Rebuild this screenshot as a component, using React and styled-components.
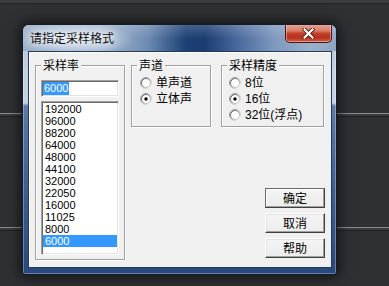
import React, { useId } from 'react';
import styled, { createGlobalStyle } from 'styled-components';

const Global = createGlobalStyle`
  html, body { margin: 0; padding: 0; background: #2f3033; }
  body { width: 389px; height: 286px; overflow: hidden; }
  * { box-sizing: border-box; }
`;

const CJK = `"Noto Sans CJK SC", "Liberation Sans", sans-serif`;
const UI = `"Liberation Sans", "Noto Sans CJK SC", sans-serif`;

const Desktop = styled.div`
  width: 389px;
  height: 286px;
  padding: 24px 0 0 22px;
  background:
    linear-gradient(180deg, #3b3c3f 0, #3b3c3f 3px, #232427 3px, #232427 4px, transparent 4px),
    linear-gradient(180deg, transparent 113px, #8a8b8e 113px, #8a8b8e 114px, #3a3b3e 114px, #3a3b3e 116px, #202124 116px, #202124 117px, transparent 117px),
    linear-gradient(180deg, transparent 227px, #8a8b8e 227px, #8a8b8e 228px, #3a3b3e 228px, #3a3b3e 230px, #202124 230px, #202124 231px, transparent 231px),
    #2f3033;
`;

const Window = styled.div`
  width: 315px;
  height: 251px;
  border: 1px solid #141c28;
  border-radius: 7px 7px 3px 3px;
  box-shadow: 0 0 12px 3px rgba(0, 0, 0, 0.55), inset 0 0 0 1px rgba(255, 255, 255, 0.3);
  background: linear-gradient(180deg, #b3c3d8 0, #c4d1e1 50px, #c4d1e1 78px, #5b7ba9 81px, #3e6093 160px, #29497d 100%);
  display: flex;
  flex-direction: column;
  overflow: hidden;
`;

const TitleBar = styled.div`
  height: 26px;
  display: flex;
  align-items: flex-start;
  padding: 0 4px 0 7px;
  background:
    radial-gradient(ellipse 62px 16px at 50px 14px, rgba(235, 242, 250, 0.85), rgba(235, 242, 250, 0) 100%),
    linear-gradient(180deg, rgba(255, 255, 255, 0.18) 0, rgba(255, 255, 255, 0) 14px),
    linear-gradient(90deg, #98adc8 0%, #a7b9cf 25%, #6d8ab2 40%, #1d4075 52%, #1a3c71 58%, #46679a 68%, #7d98bd 80%, #9bb0ca 92%, #8ea4c1 100%);
`;

const Title = styled.div`
  font: 12px/14px ${CJK};
  color: #111;
  margin-top: 6px;
  text-shadow: 0 0 6px rgba(255, 255, 255, 0.9), 0 0 10px rgba(255, 255, 255, 0.7);
`;

const CloseButton = styled.div`
  margin-left: auto;
  margin-top: -1px;
  width: 47px;
  height: 19px;
  border: 1px solid #4a1410;
  border-top: none;
  border-radius: 0 0 5px 5px;
  background: linear-gradient(180deg, #e9aa9c 0%, #d67864 40%, #c2412a 52%, #b8321f 75%, #d0604a 100%);
  box-shadow: inset 0 0 0 1px rgba(255, 220, 210, 0.45);
  display: flex;
  align-items: center;
  justify-content: center;
`;

const FrameBody = styled.div`
  flex: 1;
  display: flex;
  padding: 0 4px 6px 5px;
`;

const Client = styled.div`
  flex: 1;
  display: flex;
  gap: 6px;
  padding: 6px 6px 7px 6px;
  background: #f0f0f0;
  border: 1px solid #233a60;
  box-shadow: inset 1px 1px 0 #ffffff;
`;

const Group = styled.fieldset`
  margin: 0;
  padding: 0;
  width: ${(p) => p.$w}px;
  min-width: 0;
  border: 1px solid #a0a0a0;
  box-shadow: 1px 1px 0 #ffffff, inset 1px 1px 0 #ffffff;
`;

const Legend = styled.legend`
  margin-left: 5px;
  padding: 0 2px;
  font: 12px/14px ${CJK};
  color: #000;
`;

const GroupContent = styled.div`
  display: flex;
  flex-direction: column;
  gap: ${(p) => p.$gap || 0}px;
  padding: ${(p) => p.$pad};
`;

const Sunken = styled.div`
  background: #fff;
  border: 1px solid;
  border-color: #a0a0a0 #ffffff #ffffff #a0a0a0;
  box-shadow: inset 1px 1px 0 #696969, inset -1px -1px 0 #e3e3e3;
`;

const EditBox = styled(Sunken)`
  height: 17px;
  padding: 1px;
  display: flex;
  align-items: center;
`;

const SelText = styled.span`
  font: 11px/13px ${UI};
  background: #3399ff;
  color: #fff;
  padding: 0 1px;
`;

const ListBox = styled(Sunken)`
  height: 154px;
  padding: 1px;
  display: flex;
  flex-direction: column;
`;

const ListItem = styled.div`
  height: 12px;
  font: 11px/12px ${UI};
  padding-left: 2px;
  color: ${(p) => (p.$sel ? '#fff' : '#000')};
  background: ${(p) => (p.$sel ? '#3399ff' : 'transparent')};
`;

const RightColumn = styled.div`
  width: 194px;
  display: flex;
  flex-direction: column;
`;

const GroupRow = styled.div`
  display: flex;
  gap: 10px;
`;

const RadioRow = styled.div`
  height: 16px;
  display: flex;
  align-items: center;
  gap: 4px;
  font: 12px/16px ${UI};
  color: #000;
`;

const ButtonStack = styled.div`
  margin-top: auto;
  margin-bottom: 2px;
  align-self: flex-end;
  display: flex;
  flex-direction: column;
  gap: 5px;
`;

const Button = styled.div`
  width: 60px;
  height: 20px;
  display: flex;
  align-items: center;
  justify-content: center;
  font: 12px/14px ${CJK};
  color: #000;
  background: linear-gradient(180deg, #f4f4f4 0%, #ececec 100%);
  border: 1px solid;
  border-color: ${(p) => (p.$default ? '#6a6a6a #404040 #404040 #6a6a6a' : '#ffffff #404040 #404040 #ffffff')};
  box-shadow: inset -1px -1px 0 #a0a0a0, inset 1px 1px 0 ${(p) => (p.$default ? '#ffffff' : '#e3e3e3')};
`;

function Radio({ checked }) {
  const id = useId().replace(/:/g, '');
  return (
    <svg width="12" height="12" viewBox="0 0 12 12">
      <defs>
        <linearGradient id={`o${id}`} x1="0" y1="0" x2="1" y2="1">
          <stop offset="0" stopColor="#8a8a8a" />
          <stop offset="0.5" stopColor="#b0b0b0" />
          <stop offset="1" stopColor="#ffffff" />
        </linearGradient>
        <linearGradient id={`i${id}`} x1="0" y1="0" x2="1" y2="1">
          <stop offset="0" stopColor="#404040" />
          <stop offset="0.5" stopColor="#9a9a9a" />
          <stop offset="1" stopColor="#dcdcdc" />
        </linearGradient>
      </defs>
      <circle cx="6" cy="6" r="5.5" fill="none" stroke={`url(#o${id})`} strokeWidth="1" />
      <circle cx="6" cy="6" r="4.5" fill="#fff" stroke={`url(#i${id})`} strokeWidth="1" />
      {checked && <circle cx="6" cy="6" r="1.7" fill="#000" />}
    </svg>
  );
}

function CloseX() {
  return (
    <svg width="13" height="11" viewBox="0 0 13 11">
      <path d="M2.5 1.5 L10.5 9.5 M10.5 1.5 L2.5 9.5" stroke="#5a1a12" strokeWidth="4" strokeLinecap="square" />
      <path d="M2.5 1.5 L10.5 9.5 M10.5 1.5 L2.5 9.5" stroke="#ffffff" strokeWidth="2.2" strokeLinecap="square" />
    </svg>
  );
}

const rates = ['192000', '96000', '88200', '64000', '48000', '44100', '32000', '22050', '16000', '11025', '8000', '6000'];

export default function App() {
  return (
    <>
      <Global />
      <Desktop>
        <Window>
          <TitleBar>
            <Title>请指定采样格式</Title>
            <CloseButton>
              <CloseX />
            </CloseButton>
          </TitleBar>
          <FrameBody>
            <Client>
              <Group $w={90}>
                <Legend>采样率</Legend>
                <GroupContent $gap={4} $pad="8px 5px 4px 5px">
                  <EditBox>
                    <SelText>6000</SelText>
                  </EditBox>
                  <ListBox>
                    {rates.map((r) => (
                      <ListItem key={r} $sel={r === '6000'}>
                        {r}
                      </ListItem>
                    ))}
                  </ListBox>
                </GroupContent>
              </Group>
              <RightColumn>
                <GroupRow>
                  <Group $w={80}>
                    <Legend>声道</Legend>
                    <GroupContent $pad="3px 0 3px 8px">
                      <RadioRow>
                        <Radio />
                        <span>单声道</span>
                      </RadioRow>
                      <RadioRow>
                        <Radio checked />
                        <span>立体声</span>
                      </RadioRow>
                    </GroupContent>
                  </Group>
                  <Group $w={103}>
                    <Legend>采样精度</Legend>
                    <GroupContent $pad="3px 0 3px 7px">
                      <RadioRow>
                        <Radio />
                        <span>8位</span>
                      </RadioRow>
                      <RadioRow>
                        <Radio checked />
                        <span>16位</span>
                      </RadioRow>
                      <RadioRow>
                        <Radio />
                        <span>32位(浮点)</span>
                      </RadioRow>
                    </GroupContent>
                  </Group>
                </GroupRow>
                <ButtonStack>
                  <Button $default>确定</Button>
                  <Button>取消</Button>
                  <Button>帮助</Button>
                </ButtonStack>
              </RightColumn>
            </Client>
          </FrameBody>
        </Window>
      </Desktop>
    </>
  );
}
